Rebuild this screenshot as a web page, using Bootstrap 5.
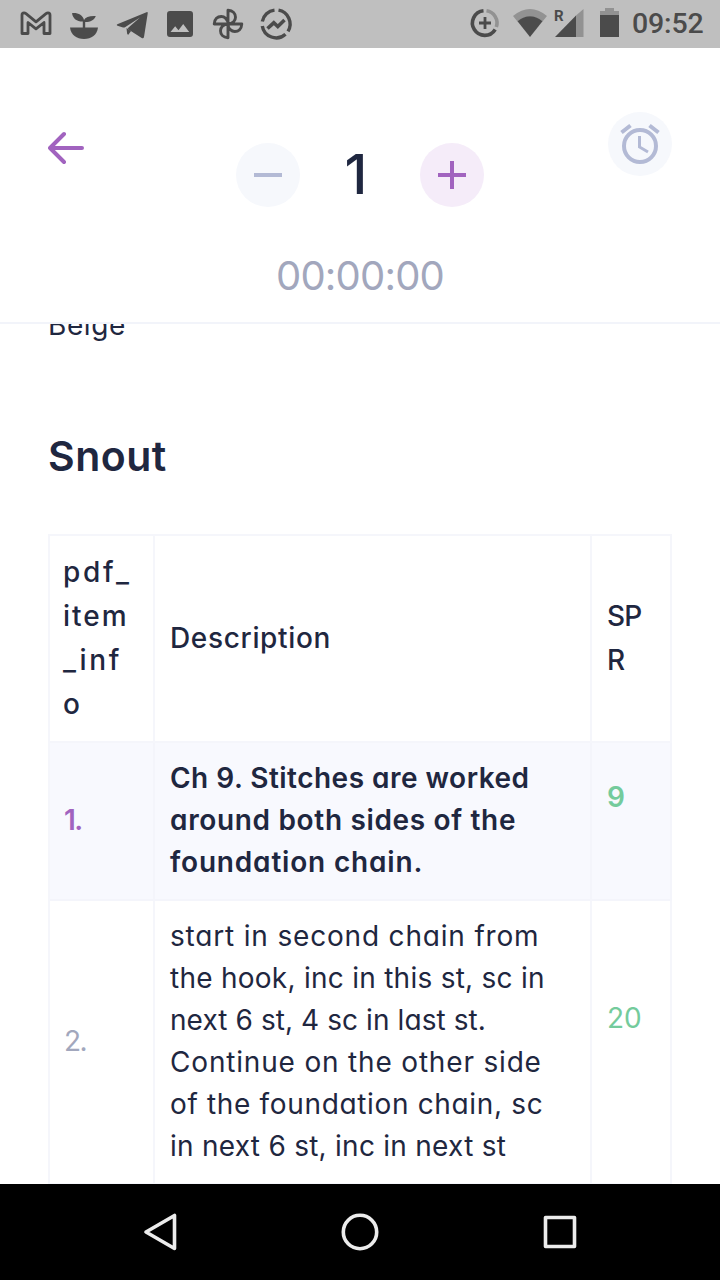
<!DOCTYPE html>
<html lang="en">
<head>
<meta charset="utf-8">
<meta name="viewport" content="width=device-width, initial-scale=1">
<title>Snout</title>
<link href="https://cdn.jsdelivr.net/npm/bootstrap@5.3.0/dist/css/bootstrap.min.css" rel="stylesheet">
<script src="https://cdn.jsdelivr.net/npm/bootstrap@5.3.0/dist/js/bootstrap.bundle.min.js"></script>
<style>
  :root { --ink: #1f2740; --muted-ink: #a2a7bd; --line: #f5f6fb; --violet: #a163bf; --mint: #74cb9c; }
  body { font-family: Inter, "Liberation Sans", sans-serif; font-feature-settings: "cv11"; color: var(--ink); font-size: 28px; line-height: 42px; }
  svg { display: block; flex: none; }
  .statusbar { height: 48px; background: #bfbfbf; color: #4b4b4b; padding: 0 16px 0 16px; }
  .clock { font: 500 28.5px/50px Roboto, sans-serif; letter-spacing: -.15px; width: 72px; white-space: nowrap; }
  .counter-head { height: 276px; border-bottom: 2px solid #f2f4fa; padding: 64px 48px 0; }
  .round-btn { width: 64px; height: 64px; border-radius: 50%; padding: 0; border: 0; background: #f6f8fc; display: flex; align-items: center; justify-content: center; }
  .round-btn.plus { background: #f5ecf9; }
  .back { width: 64px; height: 64px; margin-top: 4px; }
  .stepper { margin-top: 31px; width: 248px; }
  .count { font-size: 55px; line-height: 62px; font-weight: 500; padding-right: 8px; }
  .timer { font-size: 40px; line-height: 60px; letter-spacing: -.8px; color: var(--muted-ink); margin-top: 39px; }
  .pattern { padding: 0 48px; min-height: 0; }
  .yarn { margin-top: -20px; letter-spacing: .6px; }
  .part-title { font-size: 41px; line-height: 60px; font-weight: 600; letter-spacing: .5px; margin: 80px 0 48px; }
  .steps { width: 624px; table-layout: fixed; border-collapse: separate; border-spacing: 0; border: solid var(--line); border-width: 2px 0 0 2px; }
  .steps th, .steps td { border: solid var(--line); border-width: 0 2px 2px 0; padding: 14px 0 16px 15px; vertical-align: middle; white-space: nowrap; }
  .steps th { font-weight: 500; line-height: 44px; padding-bottom: 15px; }
  .steps .num { padding-left: 14px; letter-spacing: -1.5px; }
  .steps th:first-child { padding-left: 13px; }
  .steps .total { padding-bottom: 62px; color: var(--mint); }
  .steps .current td { background: #f8f9fe; border-color: #f4f5fb; font-weight: 600; }
  .steps .current .num { color: var(--violet); }
  .steps .num { color: var(--muted-ink); }
  .ls-n { letter-spacing: -.8px; }
  .ls-0 { letter-spacing: .08px; } .ls-1 { letter-spacing: .26px; } .ls-2 { letter-spacing: .48px; }
  .ls-3 { letter-spacing: .66px; } .ls-4 { letter-spacing: .82px; } .ls-5 { letter-spacing: 2px; } .ls-6 { letter-spacing: 2.7px; }
  .navbuttons { height: 96px; background: #000; }
</style>
</head>
<body>
<div class="vh-100 d-flex flex-column overflow-hidden bg-white">
  <div class="statusbar d-flex align-items-center flex-shrink-0">
    <div class="d-flex gap-2">
      <svg width="40" height="48" viewBox="0 0 40 48" fill="none" stroke="currentColor" stroke-width="2.800" stroke-linejoin="round"><path d="M6 33.500V15q0-2.200 2-2.200 1 0 2 .8l10 8.200 10-8.200q1-.8 2-.8 2 0 2 2.200v18.500h-6V22.500l-8 6.300-8-6.300v11z"/></svg>
      <svg width="40" height="48" viewBox="0 0 40 48" fill="currentColor"><path d="M6 27.500h28C33 35 27.500 39 20 39S7 35 6 27.500z"/><path d="M18.800 28v-6.500C12.500 21.500 9 18.500 8 13.200c6-.6 10.700 2 12 6.800 1.500-3 5.500-4.300 11.800-4-1.700 4-5 6-10.600 6V28z"/></svg>
      <svg width="40" height="48" viewBox="0 0 40 48" fill="currentColor"><path d="M5.300 24.300L34.500 12.200q1.500-.5 1.200 1.300L32 37q-.6 2-2.300.9L16.500 29.500q-1.200-.9 0-2L28 17.500 13 27.200q-1 .5-2 .2l-5.500-1.700q-1.500-.7-.2-1.400z"/><path d="M14.500 28l4.500 3-2.500 3.500q-1 .5-1.400-1z"/></svg>
      <svg width="40" height="48" viewBox="0 0 40 48" fill="currentColor"><path fill-rule="evenodd" d="M10 11h20q3 0 3 3v20q0 3-3 3H10q-3 0-3-3V14q0-3 3-3zm.5 21h18.700l-6-8-4.700 6.200-3.300-4z"/></svg>
      <svg width="40" height="48" viewBox="0 0 40 48" fill="none" stroke="currentColor" stroke-width="2.900" stroke-linejoin="round"><path d="M20 24V10.200c5 .3 7.500 3.300 7.500 7 0 3-2.500 6.800-7.500 6.800h13.800c-.3 5-3.300 7.500-7 7.500-3 0-6.800-2.500-6.800-7.500v13.800c-5-.3-7.500-3.300-7.500-7 0-3 2.500-6.800 7.500-6.800H6.200c.3-5 3.300-7.500 7-7.500 3 0 6.800 2.500 6.800 7.500z"/></svg>
      <svg width="40" height="48" viewBox="0 0 40 48" fill="none" stroke="currentColor" stroke-width="3.400"><path d="M6.300 21.500A14 14 0 0 1 18.500 10.100M22.500 10.200A14 14 0 0 1 32 31.300M29.500 34.200A14 14 0 0 1 6.300 26"/><path d="M11.500 28.500l6.300-5.700 4 3.700 6.700-6.500" stroke-width="3.600"/></svg>
    </div>
    <div class="d-flex ms-auto">
      <svg width="164" height="48" viewBox="468 0 164 48" fill="currentColor"><g fill="none" stroke="currentColor" stroke-width="3.600"><path d="M483.500 11.800A12.300 12.300 0 1 0 495.200 30.500"/><path d="M486.500 11.800A12.300 12.300 0 0 1 496.300 28" stroke="#929292"/><path d="M479 24h12M485 18v12" stroke-width="2.800"/></g><path d="M513 17q17-14 34 0l-4.500 5.500q-12.500-10-25 0z" fill="#929292"/><path d="M517.500 22.300q12.500-10 25 0L530 38z"/><path d="M576 16.500V38h7.500V10z" fill="#929292"/><path d="M555 38l21-21.500V38z"/><text x="554" y="22" font-family="Roboto" font-weight="700" font-size="15">R</text><path d="M600 16v-4h5V9h9v3h5v4z" fill="#929292"/><path d="M600 16h19v22h-19z"/></svg>
      <div class="clock">09:52</div>
    </div>
  </div>

  <header class="counter-head flex-shrink-0">
    <div class="d-flex justify-content-between align-items-start">
      <button class="btn p-0 border-0 back" aria-label="Back"><svg width="40" height="64" viewBox="0 0 40 64" fill="none" stroke="#a163bf" stroke-width="4" stroke-linecap="round" stroke-linejoin="round"><path d="M34 32H2M16 18L2 32l14 14"/></svg></button>
      <div class="stepper d-flex justify-content-between">
        <button class="round-btn" aria-label="Less"><svg width="28" height="28"><path d="M0 14h28" stroke="#b3bad5" stroke-width="4"/></svg></button>
        <span class="count">1</span>
        <button class="round-btn plus" aria-label="More"><svg width="28" height="28"><path d="M0 14h28M14 0v28" stroke="#a163bf" stroke-width="4"/></svg></button>
      </div>
      <button class="round-btn" aria-label="Timer"><svg width="64" height="64" fill="none" stroke="#b3bad5" stroke-width="4"><circle cx="32" cy="34" r="16"/><path d="M13.500 20.500l9-7M50.500 20.500l-9-7"/><path d="M31.500 24v11l8.500 5" stroke-width="3"/></svg></button>
    </div>
    <div class="timer text-center">00:00:00</div>
  </header>

  <main class="pattern flex-grow-1 overflow-hidden">
    <div class="yarn">Beige</div>
    <h2 class="part-title">Snout</h2>
    <table class="steps">
      <colgroup><col style="width:105px"><col style="width:437px"><col style="width:80px"></colgroup>
      <thead>
        <tr><th><span class="ls-6">pdf_</span><br><span class="ls-5">item</span><br><span class="ls-6">_inf</span><br>o</th><th class="ls-3">Description</th><th><span class="ls-n">SP</span><br>R</th></tr>
      </thead>
      <tbody>
        <tr class="current"><td class="num">1.</td><td><span class="ls-2">Ch 9. Stitches are worked</span><br><span class="ls-3">around both sides of the</span><br><span class="ls-4">foundation chain.</span></td><td class="total">9</td></tr>
        <tr><td class="num">2.</td><td><span class="ls-4">start in second chain from</span><br><span class="ls-1">the hook, inc in this st, sc in</span><br><span class="ls-0">next 6 st, 4 sc in last st.</span><br><span class="ls-4">Continue on the other side</span><br><span class="ls-3">of the foundation chain, sc</span><br><span class="ls-1">in next 6 st, inc in next st</span></td><td class="total">20</td></tr>
      </tbody>
    </table>
  </main>

  <nav class="navbuttons d-flex justify-content-center align-items-center flex-shrink-0" aria-label="System">
    <svg width="440" height="96" fill="none" stroke="#ececec" stroke-width="3.600" stroke-linejoin="round"><path d="M34.500 31.500v33L6 48z"/><circle cx="220" cy="48" r="16.700"/><path d="M405.500 33.500h29v29h-29z"/></svg>
  </nav>
</div>
</body>
</html>
